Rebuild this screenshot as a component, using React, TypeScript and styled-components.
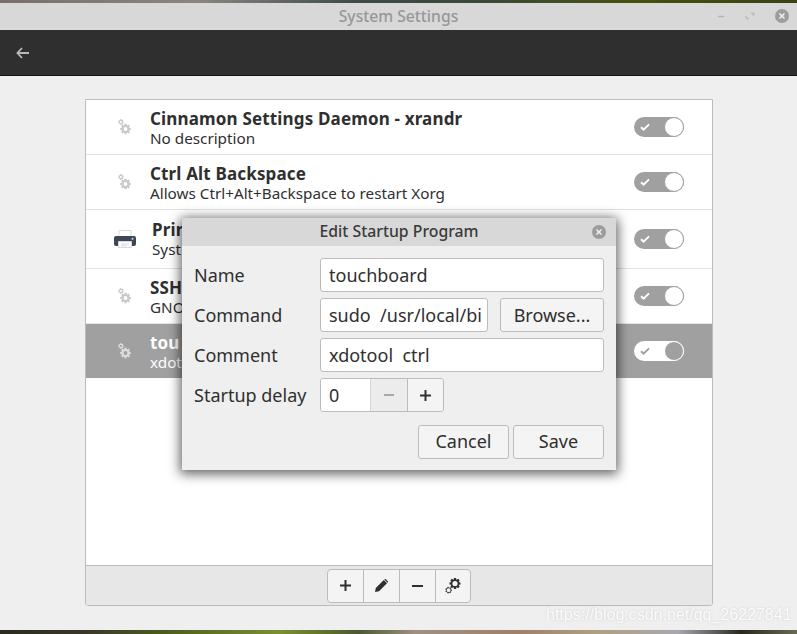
import { createGlobalStyle } from "styled-components";
import styled from "styled-components";

const GlobalStyle = createGlobalStyle`
    html, body {
        margin: 0;
        padding: 0;
        height: 634px;
        overflow: hidden;
        background: #efefef;
        font-family: "Noto Sans", "Open Sans", sans-serif;
        color: #2f2f2f;
    }
`;

const Page = styled.div`
    position: relative;
    width: 797px;
    height: 634px;
    display: flex;
    flex-direction: column;
    overflow: hidden;
`;

const Wallpaper = styled.div<{ $height: number; $colors: string }>`
    height: ${(p) => p.$height}px;
    flex: none;
    background: linear-gradient(90deg, ${(p) => p.$colors});
`;

const TitleBar = styled.div`
    height: 27px;
    flex: none;
    box-sizing: border-box;
    padding-bottom: 1px;
    background: #d8d8d8;
    display: flex;
    align-items: center;
    justify-content: center;
    position: relative;
    font-size: 15.7px;
    font-weight: 500;
    color: #979797;
`;

const WindowControls = styled.div`
    position: absolute;
    right: 8px;
    top: 6px;
    display: flex;
    align-items: center;
    gap: 18px;
`;

const HeaderBar = styled.div`
    height: 45px;
    flex: none;
    box-sizing: content-box;
    background: #2f2f2f;
    border-bottom: 1px solid #151515;
    display: flex;
    align-items: center;
    padding-left: 16px;
`;

const Content = styled.div`
    flex: 1;
    padding: 23px 84px 24px 85px;
    display: flex;
    min-height: 0;
`;

const Card = styled.div`
    flex: 1;
    display: flex;
    flex-direction: column;
    border: 1px solid #bcbcbc;
    border-radius: 0 0 3px 3px;
    background: #fff;
`;

const List = styled.div`
    flex: 1;
`;

const Row = styled.div<{ $selected?: boolean; $height: number }>`
    height: ${(p) => p.$height}px;
    box-sizing: border-box;
    display: flex;
    align-items: center;
    padding-right: 28px;
    background: ${(p) => (p.$selected ? "#a0a0a0" : "#fff")};
    color: ${(p) => (p.$selected ? "#fff" : "#2f2f2f")};
    border-bottom: 1px solid ${(p) => (p.$selected ? "#a0a0a0" : "#e2e2e2")};
`;

const IconCell = styled.div<{ $wide?: boolean }>`
    width: ${(p) => (p.$wide ? 66 : 64)}px;
    flex: none;
    display: flex;
    box-sizing: border-box;
    justify-content: flex-start;
    padding-left: ${(p) => (p.$wide ? 28 : 32)}px;
`;

const RowText = styled.div<{ $lift?: boolean }>`
    flex: 1;
    min-width: 0;
    padding-top: ${(p) => (p.$lift ? 1 : 3)}px;
`;

const RowTitle = styled.div`
    font-size: 17px;
    font-weight: 700;
    line-height: 20px;
    white-space: nowrap;
    letter-spacing: 0.16px;
`;

const RowSub = styled.div`
    font-size: 15.25px;
    line-height: 20px;
    margin-top: -1px;
    white-space: nowrap;
`;

const ToggleTrack = styled.div<{ $inverted?: boolean }>`
    position: relative;
    width: 50px;
    height: 20px;
    flex: none;
    border-radius: 10px;
    background: ${(p) => (p.$inverted ? "#fff" : "#a0a0a0")};
    display: flex;
    align-items: center;
    padding-left: 6px;
    box-sizing: border-box;
`;

const ToggleKnob = styled.div<{ $inverted?: boolean }>`
    position: absolute;
    right: 0;
    top: 0;
    width: 20px;
    height: 20px;
    box-sizing: border-box;
    border-radius: 50%;
    background: ${(p) => (p.$inverted ? "#a0a0a0" : "#fff")};
    border: 1px solid ${(p) => (p.$inverted ? "#fff" : "#a0a0a0")};
`;

const Toolbar = styled.div`
    height: 39px;
    flex: none;
    background: #e7e7e7;
    border-top: 1px solid #bcbcbc;
    border-radius: 0 0 3px 3px;
    display: flex;
    align-items: center;
    justify-content: center;
`;

const ToolGroup = styled.div`
    display: flex;
    height: 34px;
    border: 1px solid #bcbcbc;
    border-radius: 4px;
    background: #f4f4f4;
    box-sizing: border-box;
`;

const ToolButton = styled.div`
    width: 36px;
    box-sizing: border-box;
    display: flex;
    align-items: center;
    justify-content: center;
    border-right: 1px solid #bcbcbc;
    &:last-child {
        border-right: none;
        width: 34px;
    }
`;

const Dialog = styled.div`
    position: absolute;
    left: 182px;
    top: 218px;
    width: 434px;
    height: 252px;
    background: #efefef;
    border-radius: 3px 3px 0 0;
    box-shadow: 0 2px 12px 2px rgba(0, 0, 0, 0.62);
    display: flex;
    flex-direction: column;
`;

const DialogTitle = styled.div`
    height: 28px;
    flex: none;
    box-sizing: border-box;
    padding-bottom: 2px;
    background: #d8d8d8;
    border-radius: 3px 3px 0 0;
    display: flex;
    align-items: center;
    justify-content: center;
    position: relative;
    font-size: 15.8px;
    font-weight: 500;
    color: #3a3a3a;
`;

const DialogClose = styled.div`
    position: absolute;
    right: 10px;
    top: 7px;
    display: flex;
`;

const DialogBody = styled.div`
    padding: 12px 12px 12px;
    display: flex;
    flex-direction: column;
    flex: 1;
`;

const Form = styled.div`
    display: grid;
    grid-template-columns: 126px 1fr;
    row-gap: 6px;
    align-items: center;
`;

const FieldLabel = styled.div`
    font-size: 18px;
    white-space: nowrap;
`;

const FieldRow = styled.div`
    display: flex;
    gap: 12px;
`;

const TextField = styled.div<{ $width?: number }>`
    height: 34px;
    box-sizing: border-box;
    flex: ${(p) => (p.$width ? "none" : "1")};
    width: ${(p) => (p.$width ? `${p.$width}px` : "auto")};
    background: #fff;
    border: 1px solid #bcbcbc;
    border-radius: 3px;
    display: flex;
    align-items: center;
    padding: 0 0 0 8px;
    font-size: 18px;
    white-space: pre;
    overflow: hidden;
`;

const Button = styled.div<{ $width: number; $low?: boolean }>`
    width: ${(p) => p.$width}px;
    height: 34px;
    flex: none;
    box-sizing: border-box;
    padding-bottom: ${(p) => (p.$low ? 1 : 3)}px;
    background: #f4f4f4;
    border: 1px solid #bcbcbc;
    border-radius: 3px;
    display: flex;
    align-items: center;
    justify-content: center;
    font-size: 18px;
`;

const SpinBox = styled.div`
    display: flex;
    width: 124px;
    height: 34px;
    box-sizing: border-box;
    border: 1px solid #bcbcbc;
    border-radius: 3px;
    overflow: hidden;
`;

const SpinValue = styled.div`
    width: 50px;
    background: #fff;
    border-right: 1px solid #d6d6d6;
    padding: 0 0 0 8px;
    box-sizing: border-box;
    display: flex;
    align-items: center;
    font-size: 18px;
`;

const SpinStep = styled.div<{ $disabled?: boolean }>`
    flex: 1;
    background: ${(p) => (p.$disabled ? "#ececec" : "#f4f4f4")};
    border-right: 1px solid #bcbcbc;
    display: flex;
    align-items: center;
    justify-content: center;
    &:last-child {
        border-right: none;
    }
`;

const DialogActions = styled.div`
    margin-top: 13px;
    display: flex;
    justify-content: flex-end;
    gap: 4px;
`;

const Watermark = styled.div`
    position: absolute;
    left: 546px;
    top: 606px;
    font-family: "Liberation Sans", sans-serif;
    font-size: 16px;
    color: rgba(255, 255, 255, 0.92);
    text-shadow: 0 0 2px rgba(170, 170, 170, 0.5);
    white-space: nowrap;
`;

function gearPath(cx: number, cy: number, outer: number, inner: number, teeth: number) {
    const pts: string[] = [];
    const step = (Math.PI * 2) / teeth;
    for (let i = 0; i < teeth; i++) {
        const a = i * step;
        const offsets: [number, number][] = [
            [-0.3, inner],
            [-0.17, outer],
            [0.17, outer],
            [0.3, inner],
        ];
        offsets.forEach(([o, r]) => {
            const x = cx + Math.cos(a + o * step * 1.4) * r;
            const y = cy + Math.sin(a + o * step * 1.4) * r;
            pts.push(`${x.toFixed(2)} ${y.toFixed(2)}`);
        });
    }
    return `M${pts.join("L")}Z`;
}

function circlePath(cx: number, cy: number, r: number) {
    return `M${cx - r} ${cy}a${r} ${r} 0 1 0 ${r * 2} 0a${r} ${r} 0 1 0 ${-r * 2} 0Z`;
}

function GearsIcon({ color }: { color: string }) {
    return (
        <svg width="13" height="16" viewBox="0 0 13 16">
            <path
                fillRule="evenodd"
                fill={color}
                d={gearPath(3, 3, 2.9, 2.1, 7) + circlePath(3, 3, 1.1)}
            />
            <path
                fillRule="evenodd"
                fill={color}
                d={gearPath(7.5, 10, 5.4, 4, 8) + circlePath(7.5, 10, 1.9)}
            />
        </svg>
    );
}

function ToolGearsIcon() {
    return (
        <svg width="16" height="16" viewBox="0 0 16 16">
            <path
                fillRule="evenodd"
                fill="#2f2f2f"
                d={gearPath(10, 5.5, 5.6, 4.2, 8) + circlePath(10, 5.5, 2.6)}
            />
            <path
                fillRule="evenodd"
                fill="#4a4a4a"
                d={gearPath(3.6, 12.2, 3.4, 2.6, 7) + circlePath(3.6, 12.2, 1.9)}
            />
        </svg>
    );
}

function PrinterIcon() {
    return (
        <svg width="22" height="18" viewBox="0 0 22 18">
            <path d="M5 .5h12v7H5z" fill="#fff" stroke="#d5d9e4" />
            <rect x="0" y="6" width="22" height="10" rx="2" fill="#3f4658" />
            <path d="M4.5 11.5h13v6h-13z" fill="#fff" stroke="#d5d9e4" />
            <path d="M7 14h8M7 15.8h6" stroke="#d5d9e4" strokeWidth="1" />
            <circle cx="18.5" cy="8.7" r="1" fill="#d5d9e4" />
        </svg>
    );
}

function CheckIcon({ color }: { color: string }) {
    return (
        <svg width="10" height="8" viewBox="0 0 10 8">
            <path d="M1 4.2 3.6 6.6 9 1.4" fill="none" stroke={color} strokeWidth="2" />
        </svg>
    );
}

function PlusIcon() {
    return (
        <svg width="11" height="11" viewBox="0 0 11 11">
            <path d="M0 5.5h11M5.5 0v11" stroke="#2f2f2f" strokeWidth="2" />
        </svg>
    );
}

function MinusIcon({ color, width }: { color: string; width: number }) {
    return (
        <svg width={width} height="2" viewBox={`0 0 ${width} 2`}>
            <path d={`M0 1h${width}`} stroke={color} strokeWidth="2" />
        </svg>
    );
}

function PencilIcon() {
    return (
        <svg width="13" height="13" viewBox="0 0 13 13">
            <path
                d="M0 13 .8 9 8.8 1 12 4.2 4 12.2ZM9.6.2c.4-.3.9-.3 1.2 0l2 2c.3.3.3.8 0 1.2l-.3.3L9.3.5Z"
                fill="#2f2f2f"
            />
        </svg>
    );
}

function BackIcon() {
    return (
        <svg width="13" height="12" viewBox="0 0 13 12">
            <path d="M6 1 1.4 6 6 11M1.6 6H13" fill="none" stroke="#b8b8b8" strokeWidth="1.8" />
        </svg>
    );
}

function CloseCircle({ size }: { size: number }) {
    return (
        <svg width={size} height={size} viewBox="0 0 14 14">
            <circle cx="7" cy="7" r="7" fill="#9c9c9c" />
            <path d="M4.5 4.5l5 5M9.5 4.5l-5 5" stroke="#efefef" strokeWidth="1.6" />
        </svg>
    );
}

function MinimizeIcon() {
    return (
        <svg width="8" height="14" viewBox="0 0 8 14">
            <path d="M1 7.5h6" stroke="#b4b4b4" strokeWidth="1.4" />
        </svg>
    );
}

function RestoreIcon() {
    return (
        <svg width="14" height="14" viewBox="0 0 14 14">
            <path d="M8 4h3v3ZM3 10V7l3 3Z" fill="#bcbcbc" stroke="#bcbcbc" strokeWidth=".7" />
        </svg>
    );
}

const rows = [
    { title: "Cinnamon Settings Daemon - xrandr", sub: "No description", height: 55 },
    { title: "Ctrl Alt Backspace", sub: "Allows Ctrl+Alt+Backspace to restart Xorg", height: 55 },
    { title: "Prin", sub: "Syst", height: 59, printer: true },
    { title: "SSH", sub: "GNO", height: 55 },
    { title: "tou", sub: "xdot", height: 54, selected: true },
];

export default function App() {
    return (
        <Page>
            <GlobalStyle />
            <Wallpaper
                $height={3}
                $colors="#77706c 0%, #8a8580 25%, #3c4a48 45%, #3a4a3a 60%, #46500f 80%, #3a4214 100%"
            />
            <TitleBar>
                System Settings
                <WindowControls>
                    <MinimizeIcon />
                    <RestoreIcon />
                    <CloseCircle size={14} />
                </WindowControls>
            </TitleBar>
            <HeaderBar>
                <BackIcon />
            </HeaderBar>
            <Content>
                <Card>
                    <List>
                        {rows.map((row) => (
                            <Row key={row.title} $selected={row.selected} $height={row.height}>
                                <IconCell $wide={row.printer}>
                                    {row.printer ? (
                                        <PrinterIcon />
                                    ) : (
                                        <GearsIcon color={row.selected ? "#dcdcdc" : "#c9c9c9"} />
                                    )}
                                </IconCell>
                                <RowText $lift={row.printer}>
                                    <RowTitle>{row.title}</RowTitle>
                                    <RowSub>{row.sub}</RowSub>
                                </RowText>
                                <ToggleTrack $inverted={row.selected}>
                                    <CheckIcon color={row.selected ? "#a0a0a0" : "#fff"} />
                                    <ToggleKnob $inverted={row.selected} />
                                </ToggleTrack>
                            </Row>
                        ))}
                    </List>
                    <Toolbar>
                        <ToolGroup>
                            <ToolButton><PlusIcon /></ToolButton>
                            <ToolButton><PencilIcon /></ToolButton>
                            <ToolButton><MinusIcon color="#2f2f2f" width={11} /></ToolButton>
                            <ToolButton><ToolGearsIcon /></ToolButton>
                        </ToolGroup>
                    </Toolbar>
                </Card>
            </Content>
            <Wallpaper
                $height={4}
                $colors="#2a2a20 0%, #3a3528 10%, #4a5a20 20%, #7a9030 35%, #4a5a30 45%, #a09080 52%, #a08068 65%, #b0a080 75%, #a8a8b0 85%, #282820 93%, #6b6b50 100%"
            />

            <Dialog>
                <DialogTitle>
                    Edit Startup Program
                    <DialogClose><CloseCircle size={14} /></DialogClose>
                </DialogTitle>
                <DialogBody>
                    <Form>
                        <FieldLabel>Name</FieldLabel>
                        <TextField>touchboard</TextField>
                        <FieldLabel>Command</FieldLabel>
                        <FieldRow>
                            <TextField $width={168}>sudo  /usr/local/bi</TextField>
                            <Button $width={104} $low>Browse...</Button>
                        </FieldRow>
                        <FieldLabel>Comment</FieldLabel>
                        <TextField>xdotool  ctrl</TextField>
                        <FieldLabel>Startup delay</FieldLabel>
                        <SpinBox>
                            <SpinValue>0</SpinValue>
                            <SpinStep $disabled><MinusIcon color="#a8a8a8" width={10} /></SpinStep>
                            <SpinStep><PlusIcon /></SpinStep>
                        </SpinBox>
                    </Form>
                    <DialogActions>
                        <Button $width={91}>Cancel</Button>
                        <Button $width={91}>Save</Button>
                    </DialogActions>
                </DialogBody>
            </Dialog>
            <Watermark>https://blog.csdn.net/qq_26227841</Watermark>
        </Page>
    );
}
